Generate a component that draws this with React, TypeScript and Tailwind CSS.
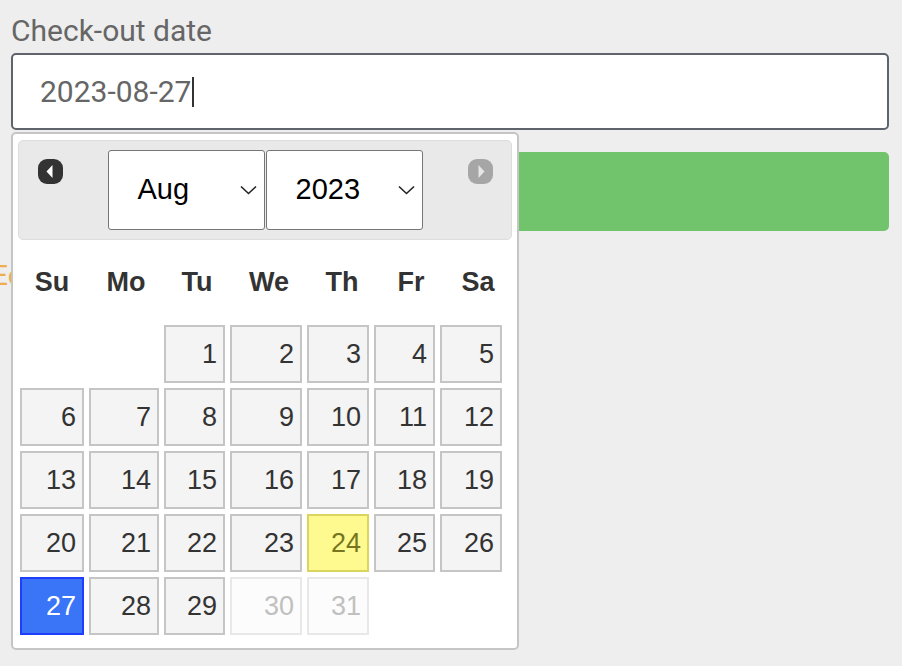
import React from "react";

const cols = "grid-cols-[64px_70px_61px_72px_62px_61px_62px]";
const headCols = "grid-cols-[64px_74px_58px_76px_60px_68px_56px]";
const dayNames = ["Su", "Mo", "Tu", "We", "Th", "Fr", "Sa"];

type Day = { n: number; kind?: "today" | "active" | "off" };

// August 2023 starts on a Tuesday
const days: (Day | null)[] = [
  null,
  null,
  ...Array.from({ length: 31 }, (_, i): Day => {
    const n = i + 1;
    if (n === 24) return { n, kind: "today" };
    if (n === 27) return { n, kind: "active" };
    if (n > 29) return { n, kind: "off" };
    return { n };
  }),
];

function NavIcon({ dir }: { dir: "prev" | "next" }) {
  const dark = dir === "prev";
  return (
    <svg width="27" height="27" viewBox="0 0 27 27" className="mt-[17px] shrink-0 blur-[0.6px]">
      <rect x="1" y="1" width="25" height="25" rx="9" fill={dark ? "#333333" : "#a6a6a6"} />
      {dark ? (
        <path d="M9.5 13.5 L15.5 7 L15.5 20 Z" fill="#ffffff" />
      ) : (
        <path d="M17.5 13.5 L11.5 7 L11.5 20 Z" fill="#e6e6e6" />
      )}
    </svg>
  );
}

function Chevron() {
  return (
    <svg width="17" height="10" viewBox="0 0 17 10" className="shrink-0">
      <path d="M1 1.5 L8.5 8.5 L16 1.5" fill="none" stroke="#222" strokeWidth="1.6" />
    </svg>
  );
}

function FakeSelect({ value }: { value: string }) {
  return (
    <div className="flex h-[80px] w-[157px] items-center justify-between rounded-[3px] border border-[#767676] bg-white pl-[29px] pr-[7px] text-[29px] text-black">
      <span>{value}</span>
      <Chevron />
    </div>
  );
}

function Cell({ day }: { day: Day }) {
  const base = "flex h-[58px] items-center justify-end border-2 pr-[6px] text-[27px]";
  if (day.kind === "today")
    return <div className={`${base} border-[#dad55e] bg-[#fffa90] text-[#777620]`}>{day.n}</div>;
  if (day.kind === "active")
    return <div className={`${base} border-[#1f3dfd] bg-[#3a74f7] text-white`}>{day.n}</div>;
  if (day.kind === "off")
    return <div className={`${base} border-[#e8e8e8] bg-[#fcfcfc] text-[#c0c0c0]`}>{day.n}</div>;
  return <div className={`${base} border-[#c5c5c5] bg-[#f4f4f4] text-[#333]`}>{day.n}</div>;
}

export default function App() {
  return (
    <div className="relative h-[666px] w-[902px] overflow-hidden bg-[#eeeeee] font-['Roboto',sans-serif]">
      <div className="pl-[11px] pr-[13px] pt-[14px]">
        <label className="block text-[30px] leading-[34px] text-[#666]">Check-out date</label>
        <div className="mt-[5px] flex h-[77px] items-center rounded-[5px] border-2 border-[#5f636b] bg-white pl-[27px]">
          <span className="text-[30px] text-[#666]">2023-08-27</span>
          <span className="ml-[1px] h-[30px] w-[1.5px] bg-[#333]" />
        </div>
        <div className="mt-[22px] h-[79px] rounded-[5px] bg-[#72c46c]" />
        <div className="-ml-[19px] mt-[30px] text-[28px] leading-[30px] text-[#f0ad4e]">Eco</div>
      </div>

      {/* datepicker popup */}
      <div className="absolute left-[11px] top-[132px] w-[508px] rounded-[5px] border-2 border-[#c5c5c5] bg-white px-[5px] pb-[13px] pt-[6px] font-['Liberation_Sans',Arial,sans-serif]">
        <div className="flex h-[100px] items-start justify-center gap-[44px] rounded-[5px] border border-[#dddddd] bg-[#e9e9e9]">
          <NavIcon dir="prev" />
          <div className="mt-[9px] flex gap-[1px]">
            <FakeSelect value="Aug" />
            <FakeSelect value="2023" />
          </div>
          <NavIcon dir="next" />
        </div>

        <div className="ml-[2px]">
          <div className={`grid h-[85px] ${headCols} items-center gap-x-[5px]`}>
            {dayNames.map((d) => (
              <div key={d} className="text-center text-[27px] font-bold text-[#333]">
                {d}
              </div>
            ))}
          </div>
          <div className={`grid ${cols} gap-[5px]`}>
            {days.map((d, i) => (d ? <Cell key={i} day={d} /> : <div key={i} />))}
          </div>
        </div>
      </div>
    </div>
  );
}
